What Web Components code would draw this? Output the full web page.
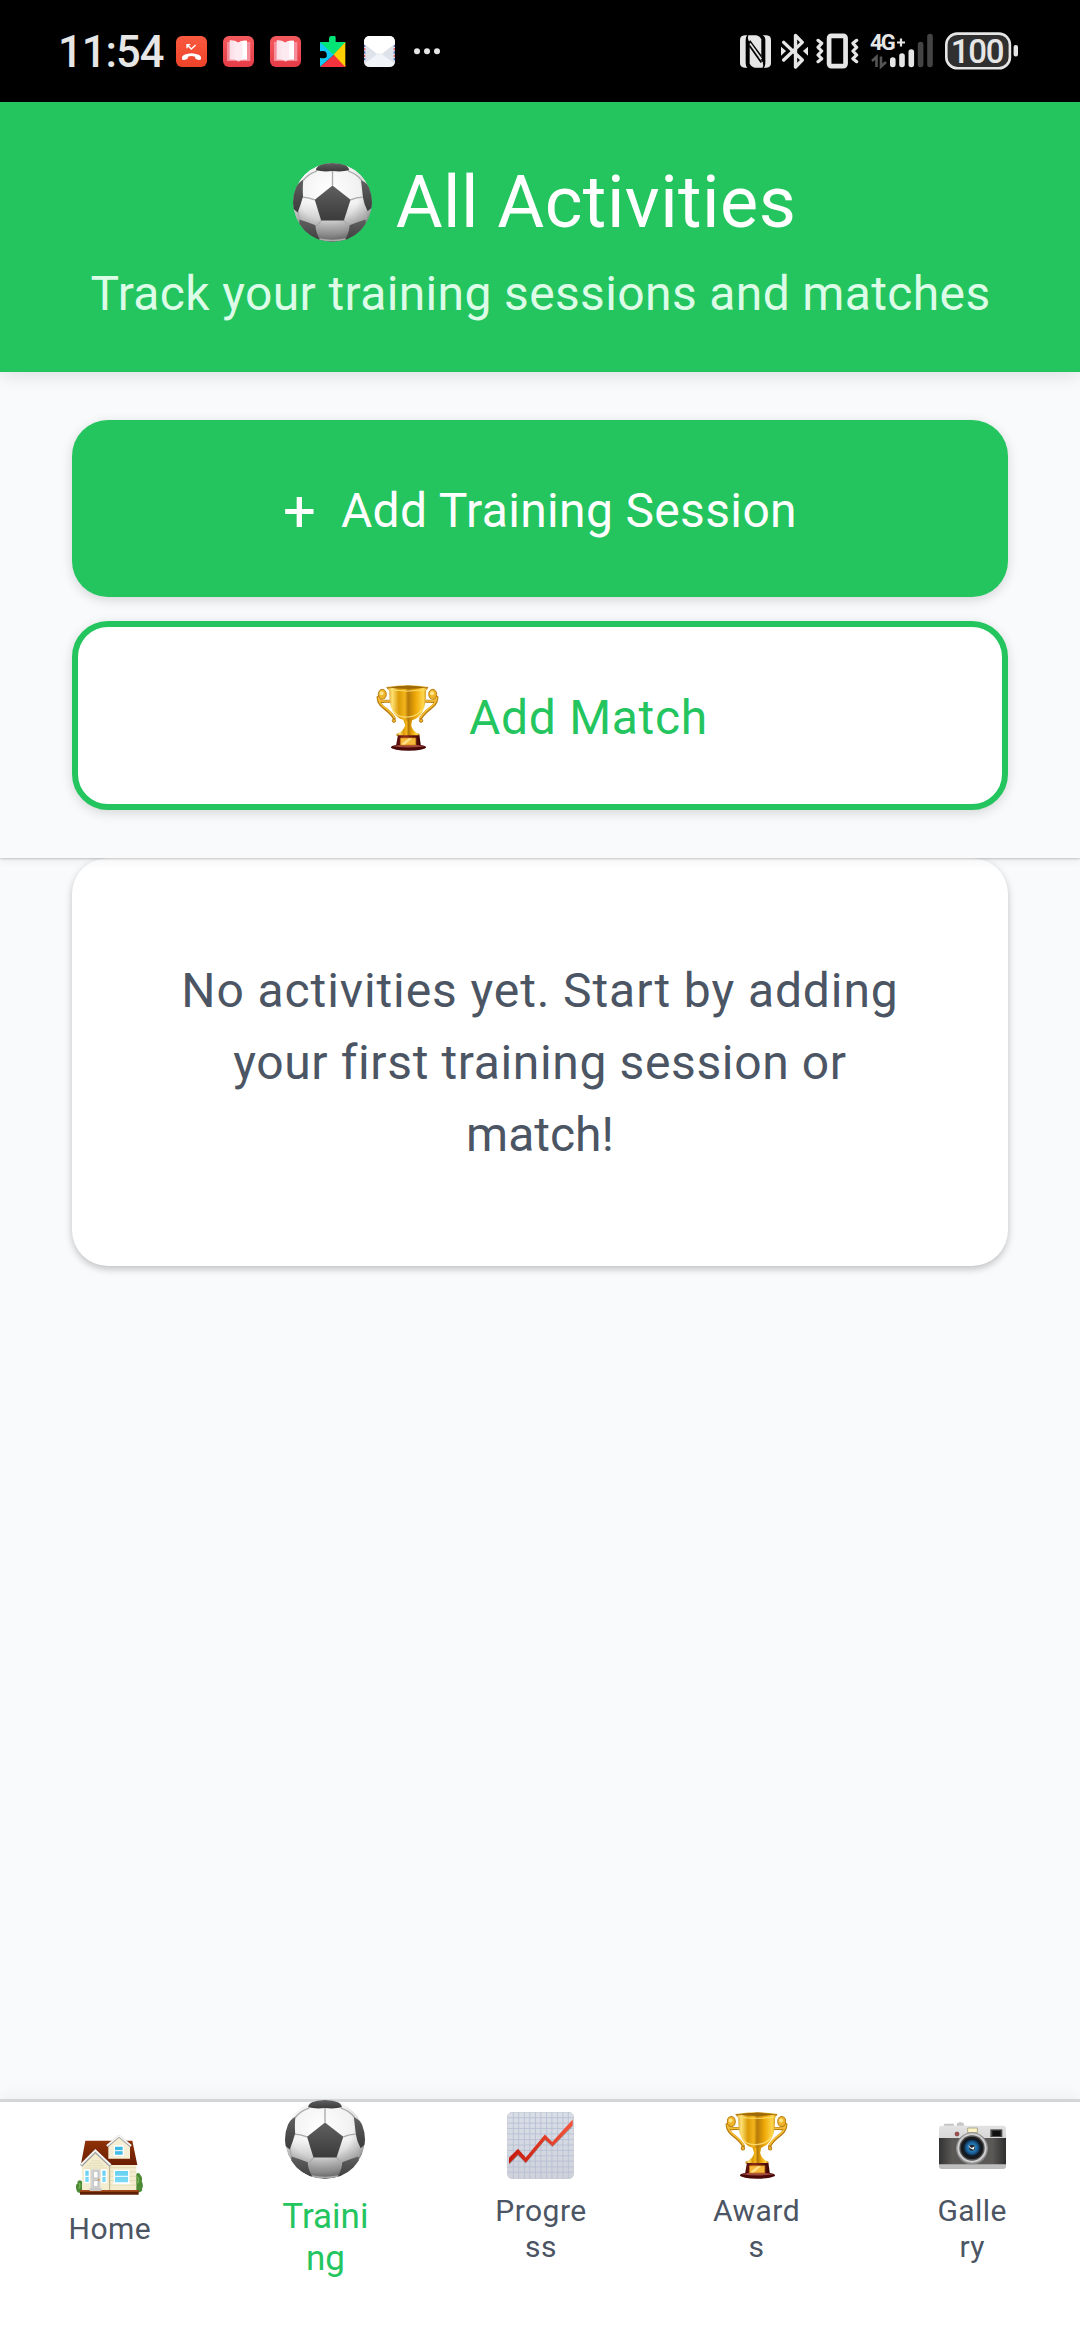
<!DOCTYPE html>
<html lang="en">
<head>
<meta charset="utf-8">
<title>All Activities</title>
<style>
  html, body { margin: 0; height: 100%; background: #f9fafc; }
  body { font-family: Roboto, "Noto Sans", sans-serif; overflow: hidden; }
</style>
</head>
<body>
<activities-app></activities-app>

<script>
const ICONS = {
  ball: ['0 0 236 236', `
    <defs>
      <radialGradient id="g" cx=".45" cy=".35" r=".66"><stop offset="0" stop-color="#fff"/><stop offset=".6" stop-color="#f1f1f1"/><stop offset=".85" stop-color="#bdbdbd"/><stop offset="1" stop-color="#777"/></radialGradient>
      <linearGradient id="k" x1="0" y1="0" x2="0" y2="1"><stop offset="0" stop-color="#606060"/><stop offset="1" stop-color="#3b3b3b"/></linearGradient>
      <linearGradient id="s" x1="0" y1="0" x2="0" y2="1"><stop offset=".5" stop-color="#888" stop-opacity="0"/><stop offset="1" stop-color="#555" stop-opacity=".65"/></linearGradient>
      <clipPath id="c"><circle cx="118" cy="118" r="118"/></clipPath>
    </defs>
    <g clip-path="url(#c)">
      <circle cx="118" cy="118" r="118" fill="url(#g)"/>
      <circle cx="118" cy="118" r="118" fill="url(#s)"/>
      <g fill="none" stroke="#aaa" stroke-width="4">
        <path d="M118 24V67M172 110Q190 103 208 102M152 172Q158 180 170 188M84 172Q78 180 70 188M65 110Q45 103 28 102M71 24Q45 32 31 52M165 24Q191 32 205 52M15 145Q16 160 20 170M221 145Q220 160 216 170M78 227Q118 236 158 227"/>
      </g>
      <g fill="url(#k)">
        <path d="M118 67L172 110L152 172H84L65 110Z"/>
        <path d="M68 22Q72 4 96 0H140Q164 4 168 22Q146 27 118 24Q90 27 68 22Z"/>
        <path d="M31 49Q28 70 30 100Q24 122 14 148L-4 132V90Q12 60 31 49Z"/>
        <path d="M203 51Q206 76 209 102Q212 124 223 144L240 130V90Q224 60 203 51Z"/>
        <path d="M19 169Q48 178 67 186Q68 208 80 228L60 240L18 200Z"/>
        <path d="M217 169Q188 178 169 186Q168 208 156 228L176 240L218 200Z"/>
      </g>
    </g>`],
  trophy: ['50 47 190 198', `
    <defs>
      <linearGradient id="g"><stop offset="0" stop-color="#b87506"/><stop offset=".14" stop-color="#ffe273"/><stop offset=".3" stop-color="#dc9b08"/><stop offset=".44" stop-color="#f3b51b"/><stop offset=".52" stop-color="#b67a09"/><stop offset=".7" stop-color="#f0aa07"/><stop offset=".88" stop-color="#ffd64d"/><stop offset="1" stop-color="#b67106"/></linearGradient>
      <linearGradient id="b"><stop offset="0" stop-color="#4a0505"/><stop offset=".35" stop-color="#8e2a1c"/><stop offset="1" stop-color="#3c0303"/></linearGradient>
    </defs>
    <g fill="none" stroke-linecap="round">
      <path d="M93 96H76Q60 99 57 86M56 84C58 116 88 116 105 147M197 96H214Q230 99 233 86M234 84C232 116 202 116 185 147" stroke="#b87b0e" stroke-width="9"/>
      <path d="M93 95H76Q62 97 58 86M57 84C60 114 89 115 105 144M197 95H214Q228 97 232 86M233 84C230 114 201 115 185 144" stroke="#f3bd35" stroke-width="5"/>
    </g>
    <g fill="#eeb52b" stroke="#b97c10" stroke-width="3"><ellipse cx="69" cy="75" rx="12" ry="15"/><ellipse cx="221" cy="75" rx="12" ry="15"/><circle cx="104" cy="154" r="5"/><circle cx="186" cy="154" r="5"/></g>
    <g fill="#ffe68a"><circle cx="67" cy="72" r="6"/><circle cx="219" cy="72" r="6"/></g>
    <path d="M132 150H160L156 168Q160 187 181 194V200H112V194Q133 187 138 168Z" fill="url(#g)"/>
    <path d="M81 53Q145 43 208 53Q206 60 201 64C202 112 190 152 146 154C102 152 89 112 90 64Q84 61 81 53Z" fill="url(#g)"/>
    <path d="M82 54Q145 45 207 54Q145 64 82 54Z" fill="#9d690b"/><path d="M88 61Q145 70 202 61" fill="none" stroke="#ffdf68" stroke-width="3"/>
    <path d="M104 126C114 150 174 150 188 120" fill="none" stroke="#ffe582" stroke-width="4" opacity=".8"/>
    <path d="M116 198H181L185 227H111Z" fill="url(#b)"/><ellipse cx="148" cy="234" rx="53" ry="10" fill="#4a0808"/><path d="M100 231Q148 219 196 231Q148 238 100 231Z" fill="#a2493c"/>
    <path d="M124 206H170V227H124Z" fill="#f6b93c" stroke="#ce8414" stroke-width="2"/><path d="M126 225L148 207H159L137 226Z" fill="#ffe08a"/>`],
  house: ['75 147 201 180', `
    <defs><linearGradient id="r" x1="0" y1="0" x2="0" y2="1"><stop offset="0" stop-color="#8e3208"/><stop offset="1" stop-color="#6b1e02"/></linearGradient>
    <linearGradient id="w" x1="0" y1="0" x2="0" y2="1"><stop offset="0" stop-color="#36b6e4"/><stop offset="1" stop-color="#7fdcf6"/></linearGradient></defs>
    <path d="M76 310Q72 296 80 292Q76 284 88 283Q98 284 98 320H82Q76 318 76 310ZM255 264Q264 257 269 268Q276 276 272 286Q279 298 273 308Q276 316 266 319H252Z" fill="#4c8a35"/>
    <path d="M259 272Q266 280 260 292M84 292Q90 298 84 308" stroke="#77b452" stroke-width="4" fill="none"/>
    <path d="M93 235H256V314H93Z" fill="#f4edcf"/><path d="M178 245H256M178 258H256M178 271H256M178 284H256M178 297H256M95 250H176M95 300H176" stroke="#ddd2aa" stroke-width="2"/>
    <path d="M103 164H244L259 237H179L134 196L90 234Z" fill="url(#r)"/>
    <path d="M172 182L204 153L237 182V218H172Z" fill="#f5eed4"/>
    <path d="M168 181L204 151L240 181" fill="none" stroke="#aaa" stroke-width="8"/><path d="M168 179L204 149L240 179" fill="none" stroke="#f5f5f2" stroke-width="5"/>
    <path d="M94 237L134 198L175 238V314H94Z" fill="#f4edcf"/><path d="M100 246H168M107 239H160M114 232H154M121 225H147" stroke="#ded4ae" stroke-width="2"/>
    <path d="M90 239L133 196L179 240" fill="none" stroke="#9f9f9c" stroke-width="9"/><path d="M90 236L133 193L179 237" fill="none" stroke="#f3f3f1" stroke-width="6"/>
    <path d="M176 242V313" stroke="#b8ad87" stroke-width="3"/>
    <g stroke="#fff" stroke-width="4" fill="url(#w)"><path d="M190 180H217V208H190ZM190 253H233V291H190ZM101 252H115V290H101ZM152 252H166V290H152Z"/></g>
    <path d="M190 194H217M190 271H233M101 271H115M152 271H166" stroke="#fff" stroke-width="3"/><path d="M185 293H238" stroke="#fff" stroke-width="4"/>
    <path d="M119 250H148V306H119Z" fill="#d4d4d4"/><path d="M127 256H141V276H127ZM127 284H141V302H127Z" fill="#fff" stroke="#aaa" stroke-width="2"/><circle cx="143" cy="281" r="2.5" fill="#c7892d"/>
    <path d="M87 312H263V326H87Z" fill="#5e2006"/><path d="M87 312H263V317H87Z" fill="#a44a1d"/><path d="M116 306H151V315H116Z" fill="#c8c8c8"/>`],
  chart: ['81 83 200 199', `
    <defs><linearGradient id="g" x1="0" y1="0" x2="0" y2="1"><stop offset="0" stop-color="#dadee7"/><stop offset="1" stop-color="#cfd2db"/></linearGradient>
    <linearGradient id="l"><stop offset="0" stop-color="#c5190d"/><stop offset="1" stop-color="#f5543a"/></linearGradient></defs>
    <rect x="82" y="84" width="198" height="197" rx="15" fill="url(#g)" stroke="#c0c3cb" stroke-width="2"/>
    <path d="M100 84V281M116 84V281M133 84V281M149 84V281M166 84V281M182 84V281M199 84V281M215 84V281M232 84V281M248 84V281M264 84V281M82 100H280M82 116H280M82 132H280M82 148H280M82 165H280M82 181H280M82 197H280M82 213H280M82 229H280M82 246H280M82 262H280" stroke="#b5bed3" stroke-width="2.4"/>
    <path d="M87 222L115 196L137 221L194 155L217 177L277 109V126L217 187L194 168L137 236L114 213L87 240Z" fill="#74706f" opacity=".55"/>
    <path d="M87 219L114 192L137 218L194 150L216 172L277 105V122L217 185L195 165L137 234L114 209L87 237Z" fill="url(#l)"/>`],
  camera: ['177 111 201 141', `
    <defs><linearGradient id="m" x1="0" y1="0" x2="0" y2="1"><stop offset="0" stop-color="#e2e2e2"/><stop offset="1" stop-color="#bcbcbc"/></linearGradient>
    <linearGradient id="k"><stop offset="0" stop-color="#333"/><stop offset=".2" stop-color="#5b5956"/><stop offset=".8" stop-color="#5b5956"/><stop offset="1" stop-color="#2e2e2e"/></linearGradient>
    <radialGradient id="b"><stop offset="0" stop-color="#b9e6fa"/><stop offset=".35" stop-color="#2d84bf"/><stop offset=".75" stop-color="#17558b"/><stop offset="1" stop-color="#0c1c2b"/></radialGradient></defs>
    <path d="M193 117H221V126H193ZM231 124V116Q241 107 251 116V124Z" fill="#c9c9c9" stroke="#a9a9a9"/>
    <rect x="177" y="122" width="201" height="130" rx="8" fill="url(#m)"/>
    <path d="M177 159H378V238H177Z" fill="url(#k)"/>
    <path d="M263 129H292V143H263Z" fill="#fdf4c6" stroke="#8f8868" stroke-width="2"/>
    <path d="M331 133H367V156H331Z" fill="#4b4b4b"/><path d="M337 137H362V153H337Z" fill="#101010"/>
    <circle cx="231" cy="147" r="6" fill="#a64b4b" stroke="#6c3a3a" stroke-width="2"/>
    <circle cx="276" cy="190" r="48" fill="#8c8c8c"/><circle cx="276" cy="189" r="44" fill="#d0d0d0"/><circle cx="276" cy="189" r="38" fill="#555"/><circle cx="276" cy="189" r="34" fill="#171b20"/><circle cx="276" cy="188" r="25" fill="url(#b)"/><circle cx="276" cy="188" r="9" fill="#1b2630"/>
    <path d="M264 180L275 189L284 184L281 194L270 190Z" fill="#fff"/>`],
  call: ['0 0 93 93', `
    <defs><linearGradient id="g" x1="0" y1="0" x2="0" y2="1"><stop offset="0" stop-color="#fa5a40"/><stop offset="1" stop-color="#ec4329"/></linearGradient></defs>
    <rect width="93" height="93" rx="18" fill="url(#g)"/>
    <path d="M33 37V26H43M34 27L46 39L59 27" fill="none" stroke="#fff" stroke-width="4"/>
    <path d="M18 68Q17 59 25 56Q46 47 68 56Q76 59 75 68Q74 73 69 72L61 70Q57 69 57 62Q46 58 36 62Q36 69 32 70L24 72Q18 73 18 68Z" fill="#fff"/>`],
  book: ['0 0 93 93', `
    <defs><linearGradient id="g" x1="0" y1="0" x2="0" y2="1"><stop offset="0" stop-color="#f45a5e"/><stop offset="1" stop-color="#e63c47"/></linearGradient>
    <linearGradient id="p"><stop offset="0" stop-color="#fbdde6"/><stop offset="1" stop-color="#fdeff4"/></linearGradient></defs>
    <rect width="93" height="93" rx="18" fill="url(#g)"/>
    <path d="M12 18H82V75H50L47 79L43 75H12Z" fill="#f58e9a"/>
    <path d="M20 13Q36 12 46 20V74Q34 70 20 71Z" fill="url(#p)"/><path d="M46 20Q56 12 72 14V71Q58 70 46 74Z" fill="#fff"/><path d="M46 20Q52 15 58 14V71L46 74Z" fill="#fdebf1"/>`],
  puzzle: ['0 0 93 93', `
    <path d="M9 18H36V8Q36 0 42 0H52Q57 0 56 6V18H85V22L46 56Z" fill="#00e676"/>
    <path d="M9 18L53 55L9 93V65Q22 69 29 63Q31 54 26 47Q18 43 9 47Z" fill="#12c8f5"/>
    <path d="M9 93L53 55L85 88V93Z" fill="#f5333f"/><path d="M85 18V93L49 55Z" fill="#ffcf00"/><path d="M9 18H85L49 56Z" fill="#00e676"/>
    <path d="M9 46Q16 46 19 48Q24 45 27 50Q30 55 26 60Q22 63 18 61Q14 65 9 64Z" fill="#000"/>`],
  mail: ['0 0 93 93', `
    <rect width="93" height="93" rx="16" fill="#f1f4f8"/>
    <path d="M0 26L38 52L0 80ZM93 26L55 52L93 80Z" fill="#dde2eb"/>
    <path d="M2 26V76M91 26V76" stroke="#5875bd" stroke-width="4" stroke-dasharray="7 13"/><path d="M2 36V76M91 36V76" stroke="#d75b65" stroke-width="4" stroke-dasharray="7 13"/>
    <path d="M0 24Q0 0 16 0H77Q93 0 93 24L58 52Q46 60 35 52Z" fill="#fff"/><path d="M2 26L35 52Q46 60 58 52L91 26" fill="none" stroke="#c9ced8" stroke-width="1.5"/>
    <path d="M1 81L36 56M92 81L57 56" stroke="#cfd5df" stroke-width="2"/>`],
  dots: ['0 0 93 93', `<g fill="#e6e6e6"><circle cx="18" cy="46" r="9"/><circle cx="48" cy="46" r="9"/><circle cx="78" cy="46" r="9"/></g>`],
  nfc: ['60 75 93 98', `
    <path d="M82 76H74Q60 77 60 90V158Q60 171 74 172H82Q77 168 77 158V90Q77 80 82 76Z" fill="#e6e6e6"/>
    <path d="M127 76H140Q153 77 153 90V158Q153 171 140 172H131Q136 168 136 158V90Q136 80 127 76Z" fill="#e6e6e6"/>
    <path d="M85 76H108Q119 77 124 88V142L86 92Q82 82 85 76Z" fill="#e6e6e6"/>
    <path d="M128 172H105Q94 171 89 160V106L128 156Q131 166 128 172Z" fill="#e6e6e6"/>
    <path d="M89 92L124 139M89 108L124 157" stroke="#000" stroke-width="5"/><path d="M90 100L124 147" stroke="#e6e6e6" stroke-width="5"/>`],
  bluetooth: ['184 70 80 108', `
    <path d="M192 98L247 151L227 172V77L247 98L192 151" fill="none" stroke="#e6e6e6" stroke-width="10" stroke-linejoin="round" stroke-linecap="round"/>
    <path d="M184 111L199 124L184 138ZM264 111L249 124L264 138Z" fill="#e6e6e6"/>`],
  vibrate: ['290 70 128 108', `
    <rect x="329" y="78.500" width="49" height="91" rx="7" fill="none" stroke="#e6e6e6" stroke-width="14"/>
    <path d="M296 92L307 101L296 113L307 124L296 136L307 147L296 156M411 92L400 101L411 113L400 124L411 136L400 147L411 156" fill="none" stroke="#e6e6e6" stroke-width="9.500" stroke-linejoin="round" stroke-linecap="round"/>`],
  signal: ['0 0 64 38', `
    <path d="M26 10.500H34M30 6.500V14.500" stroke="#e6e6e6" stroke-width="2.200"/>
    <path d="M1 29L5.500 25V35M10 24.500V34.500L15 30" fill="none" stroke="#555" stroke-width="2.600"/>
    <g stroke-width="5.600" stroke-linecap="round" stroke="#e6e6e6"><path d="M21.800 28V32.500M31 24V32.500M40.300 20V32.500"/><path d="M49.600 12.600V32.500M59 4.600V32.500" stroke="#444"/></g>`],
  battery: ['0 0 74 38', `
    <rect x="1.300" y="1.600" width="63.600" height="34.600" rx="11" fill="#303030" stroke="#e6e6e6" stroke-width="2.600"/>
    <rect x="68.600" y="13" width="4.400" height="11.500" rx="2" fill="#e6e6e6"/>`]
};

class UiIcon extends HTMLElement {
  connectedCallback() {
    const [box, art] = ICONS[this.getAttribute('name')];
    this.attachShadow({ mode: 'open' }).innerHTML = `
      <style>:host { display: block; flex: none; } svg { display: block; width: 100%; height: 100%; }</style>
      <svg viewBox="${box}" preserveAspectRatio="none" aria-hidden="true">${art}</svg>`;
  }
}
customElements.define('ui-icon', UiIcon);

class StatusBar extends HTMLElement {
  connectedCallback() {
    this.attachShadow({ mode: 'open' }).innerHTML = `
      <style>
        :host { display: flex; justify-content: space-between; height: 102px; background: #000; color: #e6e6e6; padding: 0 61px 0 58px; box-sizing: border-box; }
        .left, .right { display: flex; align-items: center; }
        .time { width: 118px; font-size: 43.5px; font-weight: 500; line-height: 102px; letter-spacing: -1px; padding-top: 3px; box-sizing: border-box; }
        .left ui-icon { width: 31px; height: 31px; margin-right: 16px; }
        .stack { display: grid; }
        .stack > * { grid-area: 1 / 1; }
        .net { font-size: 22px; font-weight: 700; line-height: 26px; letter-spacing: -1.8px; margin-left: -1px; margin-top: -2px; }
        .level { width: 66px; text-align: center; font-size: 33px; font-weight: 500; line-height: 38px; letter-spacing: -1.2px; padding-top: 1px; margin-left: -1px; }
      </style>
      <div class="left"><span class="time">11:54</span>
        <ui-icon name="call"></ui-icon><ui-icon name="book"></ui-icon><ui-icon name="book"></ui-icon><ui-icon name="puzzle"></ui-icon><ui-icon name="mail"></ui-icon><ui-icon name="dots"></ui-icon>
      </div>
      <div class="right">
        <ui-icon name="nfc" style="width:31px;height:33px;margin-right:10px"></ui-icon>
        <ui-icon name="bluetooth" style="width:27px;height:36px;margin-right:8px"></ui-icon>
        <ui-icon name="vibrate" style="width:43px;height:36px;margin-right:12px"></ui-icon>
        <div class="stack" style="margin-right:10px"><ui-icon name="signal" style="width:64px;height:38px"></ui-icon><span class="net">4G</span></div>
        <div class="stack"><ui-icon name="battery" style="width:74px;height:38px"></ui-icon><span class="level">100</span></div>
      </div>`;
  }
}
customElements.define('status-bar', StatusBar);

class PageHeader extends HTMLElement {
  connectedCallback() {
    this.attachShadow({ mode: 'open' }).innerHTML = `
      <style>
        :host { display: block; height: 270px; box-sizing: border-box; padding-top: 48px; background: #24c55f; box-shadow: 0 3px 18px rgba(0,0,0,.12); position: relative; z-index: 2; text-align: center; }
        .title { display: flex; justify-content: center; align-items: center; gap: 24px; height: 105px; padding-left: 9px; margin-bottom: 3px; font-size: 72px; line-height: 105px; letter-spacing: .45px; color: #fff; }
        ui-icon { width: 79px; height: 79px; }
        .sub { font-size: 48px; line-height: 72px; letter-spacing: .36px; color: #dcfce7; padding-left: 1px; }
      </style>
      <div class="title"><ui-icon name="ball"></ui-icon><slot name="title"></slot></div>
      <div class="sub"><slot></slot></div>`;
  }
}
customElements.define('page-header', PageHeader);

class ActionButton extends HTMLElement {
  connectedCallback() {
    this.attachShadow({ mode: 'open' }).innerHTML = `
      <style>
        :host { display: flex; align-items: center; justify-content: center; height: 177px; padding-top: 4px; box-sizing: border-box; border-radius: 36px; background: #24c55f; color: #fff; font-size: 48px; line-height: 72px; letter-spacing: .35px; box-shadow: 0 3px 12px rgba(0,0,0,.15); }
        :host([outline]) { height: 189px; padding-left: 4px; border: 6px solid #24c55f; background: #fff; color: #24c55f; letter-spacing: .7px; }
        ::slotted([slot=icon]) { margin-right: 30px; }
      </style><slot name="icon"></slot><slot></slot>`;
  }
}
customElements.define('action-button', ActionButton);

class EmptyCard extends HTMLElement {
  connectedCallback() {
    this.attachShadow({ mode: 'open' }).innerHTML = `
      <style>
        :host { display: block; margin: 0 72px; height: 408px; box-sizing: border-box; padding: 97px 96px 95px; border-radius: 36px; background: #fff; color: #4b5563; text-align: center; font-size: 48px; line-height: 72px; letter-spacing: .9px; white-space: nowrap; box-shadow: 0 3px 9px rgba(0,0,0,.14), 0 3px 6px rgba(0,0,0,.1); }
      </style><slot></slot>`;
  }
}
customElements.define('empty-card', EmptyCard);

class NavItem extends HTMLElement {
  connectedCallback() {
    this.attachShadow({ mode: 'open' }).innerHTML = `
      <style>
        :host { display: flex; flex: 1; flex-direction: column; align-items: center; text-align: center; color: #4b5563; font-size: 30px; line-height: 35.5px; letter-spacing: .45px; }
        :host([active]) { color: #24c55f; font-size: 35px; line-height: 42px; letter-spacing: 0; }
        ui-icon { width: var(--w); height: var(--h); margin-top: var(--t); margin-bottom: var(--b); }
      </style>
      <ui-icon name="${this.getAttribute('icon')}"></ui-icon><span><slot></slot></span>`;
  }
}
customElements.define('nav-item', NavItem);

class TabBar extends HTMLElement {
  connectedCallback() {
    this.attachShadow({ mode: 'open' }).innerHTML = `
      <style>:host { display: flex; height: 241px; box-sizing: border-box; border-top: 3px solid #d4d6d6; background: #fff; box-shadow: 0 -3px 15px rgba(0,0,0,.05); }</style><slot></slot>`;
  }
}
customElements.define('tab-bar', TabBar);

class ActivitiesApp extends HTMLElement {
  connectedCallback() {
    this.attachShadow({ mode: 'open' }).innerHTML = `
      <style>
        :host { display: flex; flex-direction: column; width: 1080px; height: 2340px; background: #f9fafc; }
        .actions { display: flex; flex-direction: column; gap: 24px; padding: 48px 72px; background: #f9fafc; position: relative; z-index: 1; box-shadow: 0 1px 2px rgba(0,0,0,.2), 0 3px 9px rgba(0,0,0,.06); }
        main { flex: 1; }
        .plus { font-size: 58px; letter-spacing: 0; margin-right: 25px !important; }
      </style>
      <status-bar></status-bar>
      <page-header><span slot="title">All Activities</span>Track your training sessions and matches</page-header>
      <section class="actions">
        <action-button><span slot="icon" class="plus">+</span>Add Training Session</action-button>
        <action-button outline><ui-icon slot="icon" name="trophy" style="width:63px;height:66px"></ui-icon>Add Match</action-button>
      </section>
      <main><empty-card>No activities yet. Start by adding<br><span style="letter-spacing:.63px">your first training session or</span><br><span style="letter-spacing:0">match!</span></empty-card></main>
      <tab-bar>
        <nav-item icon="house" style="--w:67px;--h:60px;--t:33px;--b:16px;padding-left:2px">Home</nav-item>
        <nav-item icon="ball" active style="--w:80px;--h:79px;--t:-2px;--b:17px">Traini<br>ng</nav-item>
        <nav-item icon="chart" style="--w:67px;--h:67px;--t:10px;--b:14px">Progre<br>ss</nav-item>
        <nav-item icon="trophy" style="--w:63px;--h:67px;--t:10px;--b:14px">Award<br>s</nav-item>
        <nav-item icon="camera" style="--w:67px;--h:47px;--t:20px;--b:24px">Galle<br>ry</nav-item>
      </tab-bar>`;
  }
}
customElements.define('activities-app', ActivitiesApp);
</script>
</body>
</html>
